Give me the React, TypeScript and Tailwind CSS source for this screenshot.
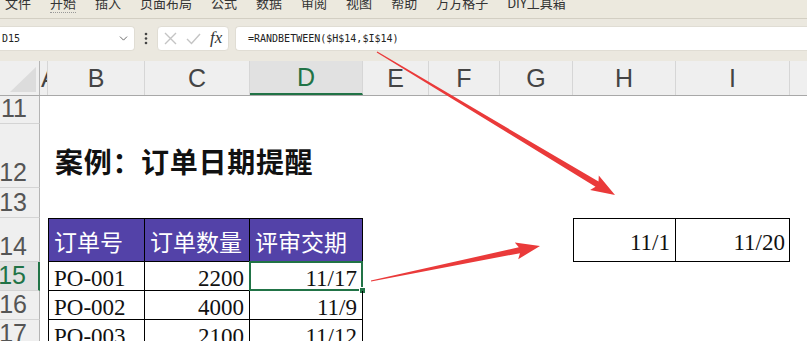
import { ChevronDown } from "lucide-react";

const COLS = "grid grid-cols-[40px_8px_97px_105px_113px_66px_71px_73px_103px_114px_1fr]";
const CJK = "font-['Noto_Sans_CJK_SC',sans-serif]";
const SERIF = "font-['Liberation_Serif','Noto_Sans_CJK_SC',serif]";

const menu = ["文件", "开始", "插入", "页面布局", "公式", "数据", "审阅", "视图", "帮助", "万方格子", "DIY工具箱"];
const letters = ["B", "C", "D", "E", "F", "G", "H", "I"];

// tapered arrow: thin tail, wider shaft near a triangular head
function arrowPoints(x1: number, y1: number, x2: number, y2: number) {
  const dx = x2 - x1;
  const dy = y2 - y1;
  const len = Math.hypot(dx, dy);
  const ux = dx / len;
  const uy = dy / len;
  const nx = -uy;
  const ny = ux;
  const head = 24;
  const bx = x2 - ux * head;
  const by = y2 - uy * head;
  const pts = [
    [x1 + nx * 0.5, y1 + ny * 0.5],
    [bx + ux * 3 + nx * 3, by + uy * 3 + ny * 3],
    [bx + nx * 8.5, by + ny * 8.5],
    [x2, y2],
    [bx - nx * 8.5, by - ny * 8.5],
    [bx + ux * 3 - nx * 3, by + uy * 3 - ny * 3],
    [x1 - nx * 0.5, y1 - ny * 0.5],
  ];
  return pts.map((p) => p.map((v) => v.toFixed(1)).join(",")).join(" ");
}

function RowHead({ n, active }: { n: number; active?: boolean }) {
  return (
    <div
      className={
        active
          ? "flex items-end justify-end pr-[12px] pb-[2px] bg-[#e1e1e1] text-[#217346] border-b border-[#d4d4d4] border-r-2 border-r-[#217346] text-[25px] leading-none"
          : "flex items-end justify-end pr-[12px] pb-[2px] bg-[#efefef] text-[#555] border-b border-[#d4d4d4] border-r border-r-[#b4b4b4] text-[25px] leading-none"
      }
    >
      {n}
    </div>
  );
}

function Head({ children, first }: { children: string; first?: boolean }) {
  return (
    <div
      className={`flex items-center pl-[5px] pt-[3px] bg-[#5342a8] text-white text-[23px] leading-none border-t border-b border-r border-black ${first ? "border-l" : ""} ${CJK}`}
    >
      {children}
    </div>
  );
}

function DataRow({ n, id, qty, date, selected }: { n: number; id: string; qty: string; date: string; selected?: boolean }) {
  return (
    <div className={`${COLS} h-[29px] shrink-0`}>
      <RowHead n={n} active={selected} />
      <div />
      <div className={`flex items-end pl-[5px] border-l border-r border-b border-black text-[23px] leading-none text-[#111] ${SERIF}`}>{id}</div>
      <div className={`flex items-end justify-end pr-[5px] border-r border-b border-black text-[23px] leading-none text-[#111] ${SERIF}`}>{qty}</div>
      <div className={`relative flex items-end justify-end pr-[5px] border-r border-b border-black text-[23px] leading-none text-[#111] ${SERIF}`}>
        {date}
        {selected && (
          <>
            <div className="absolute -left-px -top-px -right-px -bottom-px border-2 border-[#217346]" />
            <div className="absolute -right-[4px] -bottom-[4px] w-[7px] h-[7px] bg-[#217346] border border-white" />
          </>
        )}
      </div>
    </div>
  );
}

export default function App() {
  return (
    <div className="relative w-[807px] h-[341px] overflow-hidden bg-white flex flex-col font-['Liberation_Sans',sans-serif]">
      {/* ribbon tabs, cut at the top */}
      <div className={`h-[19px] shrink-0 bg-[#ece9de] border-b border-[#d3cfc3] flex items-start gap-[19px] pl-[5px] overflow-hidden text-[13px] leading-[16px] text-[#333] ${CJK}`}>
        {menu.map((m) => (
          <span key={m} className={m === "开始" ? "-mt-[5px] border-b border-dotted border-[#999] pb-[1px]" : "-mt-[5px]"}>
            {m}
          </span>
        ))}
      </div>

      {/* formula bar */}
      <div className="h-[42px] shrink-0 bg-[#ebe8df] flex items-start pt-[7px]">
        <div className="w-[135px] h-[25px] bg-white rounded-r-[4px] flex items-center justify-between pl-[2px] pr-[4px] border border-l-0 border-[#e0ddd4]">
          <span className="font-['DejaVu_Sans_Mono',monospace] text-[10px] text-[#222]">D15</span>
          <ChevronDown size={13} strokeWidth={1.6} className="text-[#555]" />
        </div>
        <div className="w-[22px] h-[25px] flex items-center justify-center">
          <svg width="4" height="13" viewBox="0 0 4 13">
            <circle cx="2" cy="2" r="1.3" fill="#444" />
            <circle cx="2" cy="6.5" r="1.3" fill="#444" />
            <circle cx="2" cy="11" r="1.3" fill="#444" />
          </svg>
        </div>
        <div className="w-[72px] h-[25px] bg-white rounded-[4px] flex items-center pl-[6px] gap-[9px] border border-[#e0ddd4]">
          <svg width="13" height="13" viewBox="0 0 13 13">
            <path d="M1 1L12 12M12 1L1 12" stroke="#c4c4c4" strokeWidth="1.4" />
          </svg>
          <svg width="15" height="12" viewBox="0 0 15 12">
            <path d="M1 6L5.5 10.5L14 1" stroke="#c4c4c4" strokeWidth="1.4" fill="none" />
          </svg>
          <span className="font-['Liberation_Serif',serif] italic text-[17px] leading-none text-[#333] -mt-[3px]">fx</span>
        </div>
        <div className="flex-1 h-[25px] ml-[6px] bg-white rounded-l-[4px] flex items-center pl-[12px] border border-r-0 border-[#e0ddd4]">
          <span className="font-['DejaVu_Sans_Mono',monospace] text-[10px] text-[#222]">=RANDBETWEEN($H$14,$I$14)</span>
        </div>
      </div>

      {/* column header */}
      <div className={`${COLS} h-[35px] shrink-0 bg-[#efefef] border-b border-[#a8a8a8] text-[25px] leading-none text-[#444]`}>
        <div className="flex items-end justify-end pr-[3px] pb-[3px] border-r border-[#b4b4b4]">
          <svg width="26" height="25" viewBox="0 0 26 25">
            <polygon points="26,0 26,25 0,25" fill="#dcdcdc" />
          </svg>
        </div>
        <div className="overflow-hidden flex items-end pb-[4px] pl-[1px] border-r border-[#d6d6d6]">A</div>
        {letters.map((l) => (
          <div
            key={l}
            className={
              l === "D"
                ? "flex items-end justify-center pb-[3px] bg-[#e1e1e1] text-[#217346] border-r border-[#d6d6d6] border-b-2 border-b-[#217346]"
                : "flex items-end justify-center pb-[4px] border-r border-[#d6d6d6]"
            }
          >
            {l}
          </div>
        ))}
        <div />
      </div>

      {/* sheet body */}
      <div className="flex flex-col">
        <div className={`${COLS} h-[28px] shrink-0`}>
          <RowHead n={11} />
        </div>
        <div className={`${COLS} h-[64px] shrink-0`}>
          <RowHead n={12} />
          <div />
          <div className={`col-span-8 flex items-end pl-[7px] pb-[13px] text-[28px] tracking-[0.7px] leading-none font-bold text-[#111] ${CJK}`}>
            案例：订单日期提醒
          </div>
        </div>
        <div className={`${COLS} h-[30px] shrink-0`}>
          <RowHead n={13} />
        </div>
        <div className={`${COLS} h-[44px] shrink-0`}>
          <RowHead n={14} />
          <div />
          <Head first>订单号</Head>
          <Head>订单数量</Head>
          <Head>评审交期</Head>
          <div />
          <div />
          <div />
          <div className={`flex items-center justify-end pr-[5px] pt-[4px] border border-black text-[23px] leading-none text-[#111] ${SERIF}`}>11/1</div>
          <div className={`flex items-center justify-end pr-[4px] pt-[4px] border-t border-r border-b border-black text-[23px] leading-none text-[#111] ${SERIF}`}>11/20</div>
        </div>
        <DataRow n={15} id="PO-001" qty="2200" date="11/17" selected />
        <DataRow n={16} id="PO-002" qty="4000" date="11/9" />
        <DataRow n={17} id="PO-003" qty="2100" date="11/12" />
      </div>

      {/* annotation arrows */}
      <svg className="absolute inset-0 pointer-events-none" width="807" height="341" viewBox="0 0 807 341">
        <polygon points={arrowPoints(377, 52, 615, 195)} fill="#ea3a3a" />
        <polygon points={arrowPoints(371, 281, 540, 246)} fill="#ea3a3a" />
      </svg>
    </div>
  );
}
